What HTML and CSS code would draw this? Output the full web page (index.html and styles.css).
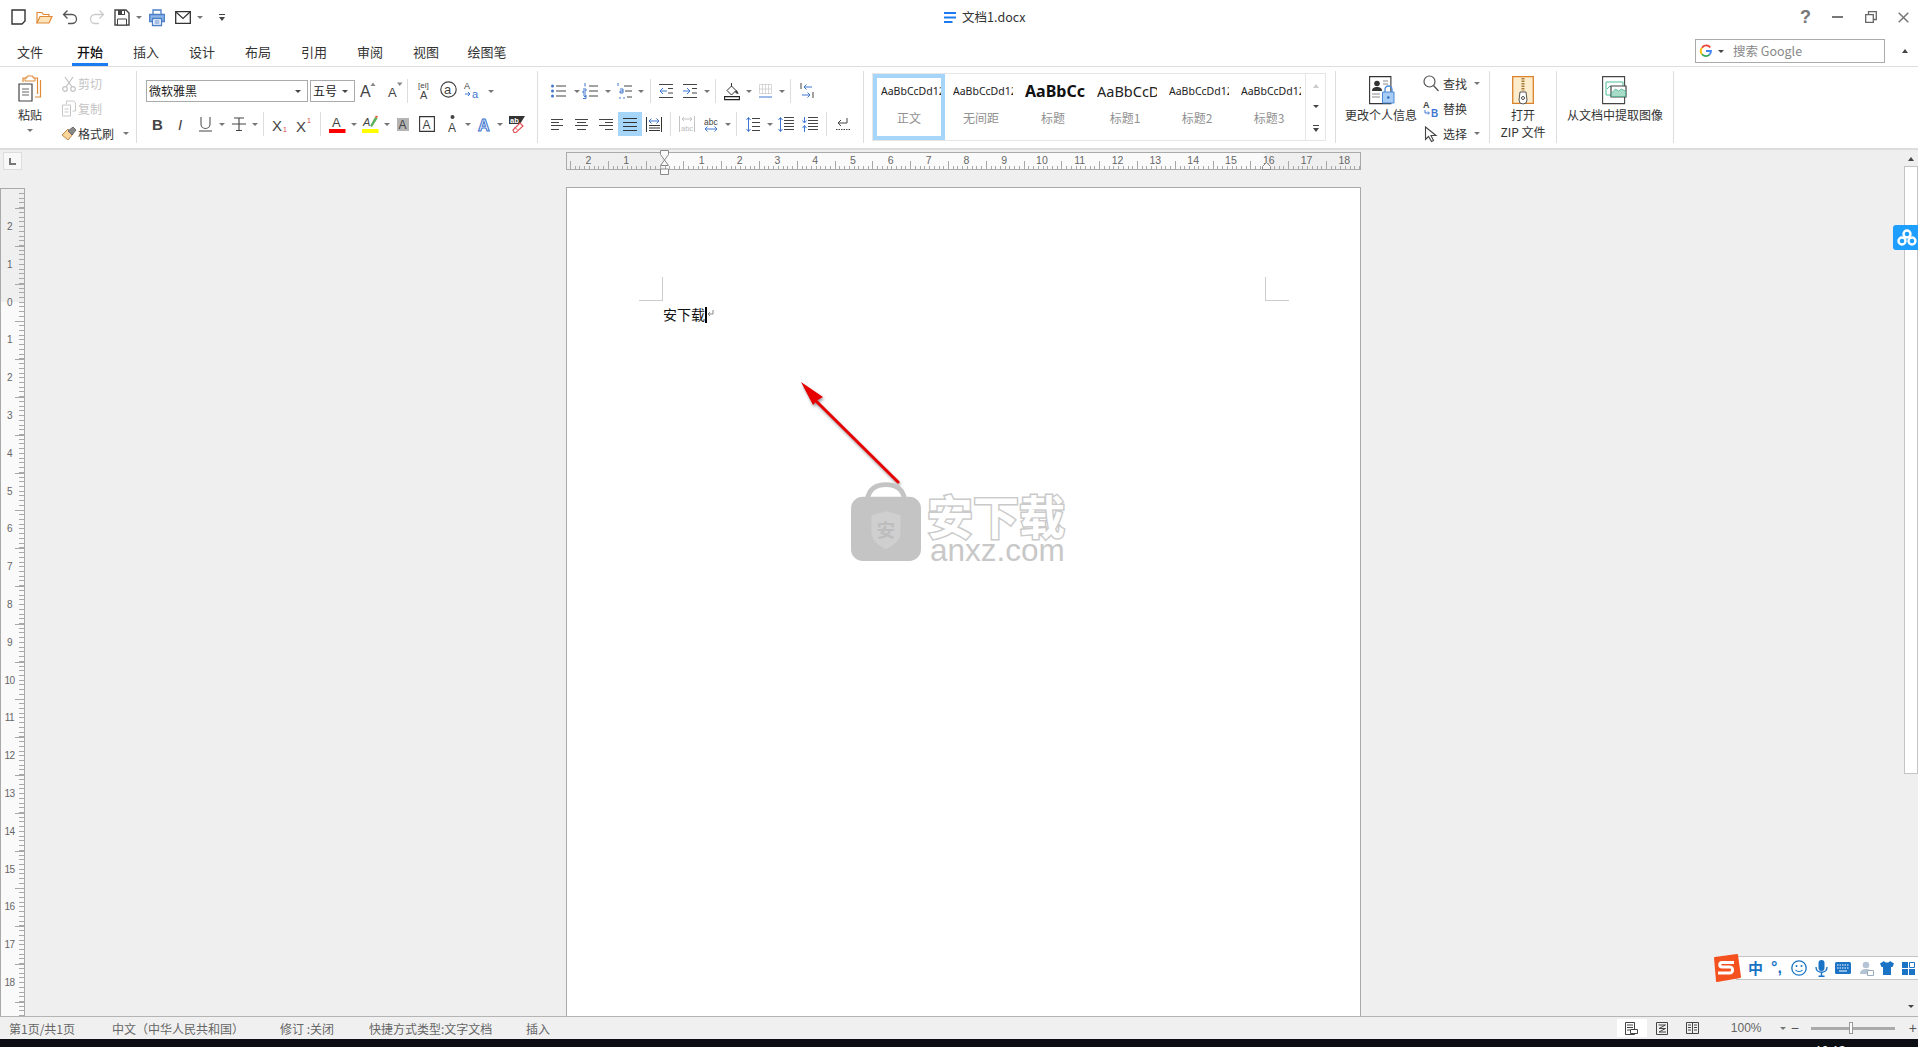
FILE: index.html
```html
<!DOCTYPE html>
<html lang="zh-CN">
<head>
<meta charset="utf-8">
<title>文档1.docx</title>
<link rel="stylesheet" href="styles.css">
</head>
<body>
<div class="app">
  <header class="titlebar">
    <div class="qat irow">
      <svg width="15" height="16" viewBox="0 0 15 16"><path d="M1 1h13v11l-3 3H1z" stroke="#333" stroke-width="1.400"/></svg>
      <svg width="17" height="13" viewBox="0 0 17 13"><path d="M1 12V1.500h5l1.500 2H13v2" stroke="#e08a36" stroke-width="1.200"/><path d="M1 12l3-6.500h12L13 12z" fill="#fde3ba" stroke="#e08a36" stroke-width="1.200"/></svg>
      <svg width="16" height="16" viewBox="0 0 16 16"><path d="M5.500 1.500L1.500 5.500l4 4M1.500 5.500H10a4.500 4.500 0 0 1 0 9H6" stroke="#555" stroke-width="1.300"/></svg>
      <svg width="16" height="16" viewBox="0 0 16 16"><path d="M10.500 1.500l4 4-4 4M14.500 5.500H6a4.500 4.500 0 0 0 0 9h4" stroke="#ccc" stroke-width="1.300"/></svg>
      <svg width="16" height="17" viewBox="0 0 16 17"><path d="M1 1h11l3 3v12H1z" fill="#fff" stroke="#444" stroke-width="1.400"/><path d="M4 1h7v5H4z" fill="#444"/><path d="M8 2h2v3H8z" fill="#fff"/><path d="M3.500 10h9v6h-9z" fill="#fff" stroke="#444"/></svg>
      <i class="caret"></i>
      <svg width="16" height="17" viewBox="0 0 16 17"><path d="M4 5V1h8v4" stroke="#4a7fc8" stroke-width="1.300"/><path d="M.7 5.500h14.600v7H.7z" fill="#8db4e6" stroke="#4a7fc8" stroke-width="1.300"/><path d="M3.500 9.500h9v7h-9z" fill="#fff" stroke="#4a7fc8" stroke-width="1.300"/><path d="M5.500 12h5M5.500 14h5" stroke="#4a7fc8"/></svg>
      <svg width="16" height="13" viewBox="0 0 16 13"><path d="M.7.700h14.600v11.600H.7z" stroke="#333" stroke-width="1.300"/><path d="M1 1l7 6.500L15 1" stroke="#333" stroke-width="1.200"/></svg>
      <i class="caret"></i>
      <svg width="6" height="7" viewBox="0 0 6 7"><path d="M0 0h6v1H0z" fill="#444"/><path d="M0 3h6L3 7z" fill="#444"/></svg>
    </div>
    <div class="doc-title">
      <svg width="12" height="11" viewBox="0 0 12 11"><path d="M0 0h12v2H0zM0 4.500h12v2H0zM0 9h8.500v2H0z" fill="#1a7cf0"/></svg>
      <span>文档1.docx</span>
    </div>
    <div class="winbtns irow">
      <span class="help">?</span>
      <svg width="11" height="3" viewBox="0 0 11 3"><path d="M0 0h11v2H0z" fill="#777"/></svg>
      <svg width="12" height="12" viewBox="0 0 12 12"><path d="M.7 3.700h7.600v7.600H.7z" stroke="#666" stroke-width="1.300"/><path d="M3.500 3.500V.7h7.800v7.800H8.500" stroke="#666" stroke-width="1.300"/></svg>
      <svg width="11" height="11" viewBox="0 0 11 11"><path d="M.7.700l9.600 9.600M10.300.700L.7 10.300" stroke="#777" stroke-width="1.500"/></svg>
    </div>
  </header>

  <nav class="tabs">
    <a class="tab first"><span>文件</span></a>
    <a class="tab active"><span>开始</span></a>
    <a class="tab"><span>插入</span></a>
    <a class="tab"><span>设计</span></a>
    <a class="tab"><span>布局</span></a>
    <a class="tab"><span>引用</span></a>
    <a class="tab"><span>审阅</span></a>
    <a class="tab"><span>视图</span></a>
    <a class="tab wide"><span>绘图笔</span></a>
    <div class="search">
      <svg width="12" height="12" viewBox="0 0 12 12"><path d="M10.300 2.500A5 5 0 0 0 2 2.800" stroke="#ea4335" stroke-width="1.800"/><path d="M2 2.800a5 5 0 0 0 0 6.400" stroke="#fbbc05" stroke-width="1.800"/><path d="M2 9.200a5 5 0 0 0 7.500.4" stroke="#34a853" stroke-width="1.800"/><path d="M9.500 9.600A5 5 0 0 0 11 6H6" stroke="#4285f4" stroke-width="1.800"/></svg>
      <i class="caret dark"></i>
      <span>搜索 Google</span>
    </div>
    <i class="caret up collapse"></i>
  </nav>

  <section class="ribbon">
    <div class="group g1">
      <div class="paste">
        <svg width="24" height="27" viewBox="0 0 24 27"><path d="M5 7V3h14.500v16" stroke="#e08a36" stroke-width="1.200"/><path d="M22.500 5v17H17" stroke="#e08a36" stroke-width="1.200"/><path d="M9 3V1h6v2h2v3H7V3z" fill="#fff" stroke="#e08a36"/><path d="M1 9h13v17H1z" fill="#fff" stroke="#444" stroke-width="1.200"/><path d="M4 14h7M4 17h7M4 20h7" stroke="#666"/></svg>
        <span class="paste-label">粘贴</span>
        <i class="caret"></i>
      </div>
      <div class="list">
        <div class="li disabled"><svg width="14" height="16" viewBox="0 0 14 16"><path d="M3 1l7 10M11 1L4 11" stroke="#c4c4c4" stroke-width="1.300"/><circle cx="3" cy="13" r="2.300" stroke="#c4c4c4" stroke-width="1.200"/><circle cx="11" cy="13" r="2.300" stroke="#c4c4c4" stroke-width="1.200"/></svg><span>剪切</span></div>
        <div class="li disabled"><svg width="15" height="17" viewBox="0 0 15 17"><path d="M5 4V1h7l2 2v8h-3" stroke="#c8c8c8"/><path d="M1 5h8v11H1z" stroke="#c8c8c8"/><path d="M3 9h4M3 12h4" stroke="#c8c8c8"/></svg><span>复制</span></div>
        <div class="li"><svg width="16" height="15" viewBox="0 0 16 15"><path d="M1 9l6-6 5 5-5 6z" fill="#fbd49a" stroke="#b58a55"/><path d="M7 5l5-4 3 3-4 5z" fill="#888" stroke="#555" stroke-width=".8"/></svg><span>格式刷</span><i class="caret li-caret"></i></div>
      </div>
    </div>

    <div class="group g2">
      <div class="grow g2r1">
        <div class="select font-sel"><span>微软雅黑</span><i class="caret dark"></i></div>
        <div class="select size-sel"><span>五号</span><i class="caret dark"></i></div>
        <svg width="17" height="15" viewBox="0 0 17 15"><text x="0" y="14.500" class="ig" font-size="16">A</text><path d="M10.500 4l2.500-3.500L15.500 4z" fill="#888"/></svg>
        <svg width="16" height="15" viewBox="0 0 16 15"><text x="0" y="14.500" class="ig" font-size="13">A</text><path d="M9 .5h5.500L11.700 4z" fill="#888"/></svg>
        <i class="vsep"></i>
        <svg width="14" height="18" viewBox="0 0 14 18"><text x="0" y="7" class="ig" font-size="8">[ei]</text><text x="2" y="17.500" class="ig" font-size="11">A</text></svg>
        <svg width="17" height="17" viewBox="0 0 17 17"><circle cx="8.500" cy="8.500" r="7.700" stroke="#444" stroke-width="1.200"/><text x="4" y="12.500" class="ig" font-size="13">a</text></svg>
        <svg width="16" height="17" viewBox="0 0 16 17"><text x="0" y="8" class="ig" font-size="9">A</text><text x="8" y="16.500" class="ib" font-size="11">a</text><path d="M1 13h5M4 11l2 2-2 2" stroke="#3f77d0"/></svg>
        <i class="caret"></i>
      </div>
      <div class="grow g2r2">
        <svg width="11" height="14" viewBox="0 0 11 14"><text x="0" y="13" class="ig bold" font-size="15">B</text></svg>
        <svg width="10" height="14" viewBox="0 0 10 14"><text x="1" y="13" class="ig ital" font-size="15">I</text></svg>
        <svg width="13" height="16" viewBox="0 0 13 16"><path d="M2 1v7a4.500 4.500 0 0 0 9 0V1" stroke="#555" stroke-width="1.100"/><path d="M0 15h13" stroke="#444"/></svg>
        <i class="caret"></i>
        <svg width="14" height="14" viewBox="0 0 14 14"><path d="M2 1h10M7 1v13M0 7h14M4 13.500h6" stroke="#444" stroke-width="1.100"/></svg>
        <i class="caret"></i>
        <i class="vsep"></i>
        <svg width="16" height="15" viewBox="0 0 16 15"><text x="0" y="14" class="ig" font-size="15">X</text><text x="11" y="14.500" class="ir" font-size="7">1</text></svg>
        <svg width="16" height="15" viewBox="0 0 16 15"><text x="0" y="14.500" class="ig" font-size="15">X</text><text x="11" y="6" class="ir" font-size="7">1</text></svg>
        <i class="vsep"></i>
        <svg width="17" height="18" viewBox="0 0 17 18"><text x="3" y="12" class="ig" font-size="13">A</text><path d="M0 14h16.500v4H0z" fill="#f00"/></svg>
        <i class="caret"></i>
        <svg width="17" height="18" viewBox="0 0 17 18"><text x="1" y="11" class="ig ital" font-size="11">A</text><path d="M8 11l5-9 2.500 1.500L10 12z" fill="#5fb05a"/><path d="M13 2l1-1.500 2 1-1 1.500z" fill="#e6522c"/><path d="M0 14h16.500v4H0z" fill="#ff0"/></svg>
        <i class="caret"></i>
        <svg width="12" height="13" viewBox="0 0 12 13"><path d="M0 0h12v13H0z" fill="#b4b4b4"/><text x="1.500" y="11" class="ig" font-size="12">A</text></svg>
        <svg width="16" height="16" viewBox="0 0 16 16"><path d="M.6.600h14.800v14.800H.6z" stroke="#333" stroke-width="1.100"/><text x="3.500" y="12.500" class="ig" font-size="12">A</text></svg>
        <svg width="11" height="18" viewBox="0 0 11 18"><circle cx="5.500" cy="2" r="2" fill="#444"/><text x="1" y="17" class="ig" font-size="12">A</text></svg>
        <i class="caret"></i>
        <svg class="glow" width="14" height="15" viewBox="0 0 14 15"><text x="1" y="14" class="bold" font-size="16">A</text></svg>
        <i class="caret"></i>
        <svg width="16" height="17" viewBox="0 0 16 17"><path d="M0 0h16l-5 8H0z" fill="#333"/><text x="1" y="7" class="iw" font-size="7.500">ab</text><path d="M4 14l7-7 3 3-7 6.500H5z" fill="#fff" stroke="#e0545a" stroke-width="1.200"/><path d="M5.500 11l3 3" stroke="#e0545a"/></svg>
      </div>
    </div>

    <div class="group g3">
      <div class="grow g3r1">
        <svg width="15" height="14" viewBox="0 0 15 14"><circle cx="1.500" cy="2" r="1.500" fill="#3f77d0"/><circle cx="1.500" cy="7" r="1.500" fill="#3f77d0"/><circle cx="1.500" cy="12" r="1.500" fill="#3f77d0"/><path d="M5 2h10M5 7h10M5 12h10" stroke="#444"/></svg>
        <i class="caret"></i>
        <svg width="15" height="16" viewBox="0 0 15 16"><path d="M2 0v3.500M0 6h3v2H0v2h3M0 12h3v3.500H0M3 13.500H1" stroke="#3f77d0"/><path d="M6 3h9M6 8h9M6 13h9" stroke="#444"/></svg>
        <i class="caret"></i>
        <svg width="15" height="16" viewBox="0 0 15 16"><path d="M1 0v3M3 6h3v4H3V8h3M7 14v2M3 14v2" stroke="#3f77d0"/><path d="M7 3h8M8 8h7M10 14h5" stroke="#444"/></svg>
        <i class="caret"></i>
        <i class="vsep"></i>
        <svg width="14" height="14" viewBox="0 0 14 14"><path d="M0 .5h14M9 4.500h5M9 9h5M0 13.500h14" stroke="#444"/><path d="M8 7H1M4 4L1 7l3 3" stroke="#3f77d0"/></svg>
        <svg width="14" height="14" viewBox="0 0 14 14"><path d="M0 .5h14M9 4.500h5M9 9h5M0 13.500h14" stroke="#444"/><path d="M0 7h7M4 4l3 3-3 3" stroke="#3f77d0"/></svg>
        <i class="caret"></i>
        <i class="vsep"></i>
        <svg width="16" height="17" viewBox="0 0 16 17"><path d="M7.500 0v6" stroke="#333"/><path d="M7.500 3L3 7.500 7.500 12l4.500-4.500z" fill="#fff" stroke="#333"/><path d="M12 7c1.500 1 2.500 2.500 2.500 4-1.500 0-3-1-3.500-2z" fill="#444"/><path d="M.6 13.600h14.800v3H.6z" fill="#fff" stroke="#222" stroke-width="1.100"/></svg>
        <i class="caret"></i>
        <svg width="13" height="14" viewBox="0 0 13 14"><path d="M.5.500h12v9H.5zM.5 5h12M6.500.5v9M3.500.5v9M9.500.5v9" stroke="#b4b4b4" stroke-dasharray="1 1"/><path d="M0 13h13" stroke="#3f77d0"/></svg>
        <i class="caret"></i>
        <i class="vsep"></i>
        <svg width="14" height="16" viewBox="0 0 14 16"><path d="M1 0v6M13 9v6" stroke="#444"/><path d="M12 4H4M6.500 1.500L4 4l2.500 2.500M2 12h8M7.500 9.500L10 12l-2.500 2.500" stroke="#3f77d0"/></svg>
      </div>
      <div class="grow g3r2">
        <svg width="12" height="11" viewBox="0 0 12 11"><path d="M0 .5h12M0 3.500h8M0 6.500h12M0 10.500h8" stroke="#444"/></svg>
        <svg width="13" height="11" viewBox="0 0 13 11"><path d="M0 .5h13M2 3.500h9M0 6.500h13M2 10.500h9" stroke="#444"/></svg>
        <svg width="14" height="11" viewBox="0 0 14 11"><path d="M0 .5h14M6 3.500h8M0 6.500h14M6 10.500h8" stroke="#444"/></svg>
        <div class="active-btn"><svg width="14" height="13" viewBox="0 0 14 13"><path d="M0 .5h14M0 4.500h14M0 8.500h14M0 12.500h14" stroke="#333"/></svg></div>
        <svg width="16" height="15" viewBox="0 0 16 15"><path d="M.5 0v15M15.500 0v15M3 8.500h11M3 11h11M3 13.500h11" stroke="#333"/><path d="M3 4h10M5.500 1.500L3 4l2.500 2.500M10.500 1.500L13 4l-2.500 2.500" stroke="#3f77d0"/></svg>
        <i class="vsep"></i>
        <svg width="16" height="16" viewBox="0 0 16 16"><path d="M3 3h10M5 1L3 3l2 2M11 1l2 2-2 2" stroke="#c4c4c4"/><path d="M.5 0v16M15.500 0v16" stroke="#c4c4c4"/><text x="2" y="14.500" class="il" font-size="7.500">abc</text></svg>
        <svg width="14" height="15" viewBox="0 0 14 15"><text x="0" y="7.500" class="ig" font-size="8.500">abc</text><path d="M1 12h12M3.500 9.500L1 12l2.500 2.500M10.500 9.500L13 12l-2.500 2.500" stroke="#3f77d0"/></svg>
        <i class="caret"></i>
        <i class="vsep"></i>
        <svg width="14" height="15" viewBox="0 0 14 15"><path d="M6 1.500h8M6 5.500h8M6 9.500h8M6 13.500h8" stroke="#444"/><path d="M2.500 .5v14M.5 3l2-2.500 2 2.500M.5 12l2 2.500 2-2.500" stroke="#3f77d0"/></svg>
        <i class="caret"></i>
        <svg width="16" height="15" viewBox="0 0 16 15"><path d="M6 .5h10M6 3.500h10M6 6.500h10M6 9.500h10M6 12.500h10" stroke="#444"/><path d="M2.500 .5v14M.5 3l2-2.500 2 2.500M.5 12l2 2.500 2-2.500" stroke="#3f77d0"/></svg>
        <svg width="16" height="15" viewBox="0 0 16 15"><path d="M6 .5h10M6 3.500h10M6 6.500h10M6 9.500h10M6 12.500h10" stroke="#444"/><path d="M2.500 0v5.500M.5 3.500l2 2.500 2-2.500M2.500 15V9M.5 11l2-2.500 2 2.500" stroke="#3f77d0"/></svg>
        <i class="vsep"></i>
        <svg width="14" height="12" viewBox="0 0 14 12"><path d="M11 0v5H2M5 2L2 5l3 3" stroke="#444"/><path d="M0 11.500h14" stroke="#444" stroke-dasharray="1.500 1"/></svg>
      </div>
    </div>

    <div class="group g4">
      <div class="gallery">
        <div class="style selected"><span class="pv">AaBbCcDd12</span><span class="sl">正文</span></div>
        <div class="style"><span class="pv">AaBbCcDd12</span><span class="sl">无间距</span></div>
        <div class="style"><span class="pv h0">AaBbCc</span><span class="sl">标题</span></div>
        <div class="style"><span class="pv h1">AaBbCcD</span><span class="sl">标题1</span></div>
        <div class="style"><span class="pv">AaBbCcDd12</span><span class="sl">标题2</span></div>
        <div class="style"><span class="pv">AaBbCcDd12</span><span class="sl">标题3</span></div>
        <div class="gal-scroll">
          <i class="caret up light"></i>
          <i class="caret dark"></i>
          <svg width="6" height="7" viewBox="0 0 6 7"><path d="M0 0h6v1H0z" fill="#444"/><path d="M0 3h6L3 7z" fill="#444"/></svg>
        </div>
      </div>
    </div>

    <div class="group g5">
      <div class="big bigw">
        <svg width="25" height="28" viewBox="0 0 25 28"><path d="M.6.600h21.300v27H.6z" fill="#fff" stroke="#333" stroke-width="1.100"/><circle cx="8" cy="7.500" r="2.800" fill="#333"/><path d="M3 15c0-3 2-4 5-4s5 1 5 4z" fill="#333"/><path d="M14 5h5M14 8h5M3 18h8M3 21h8" stroke="#888"/><path d="M16 16v-2.500a3.500 3.500 0 0 1 7 0V16" stroke="#4a88d8" stroke-width="1.300"/><path d="M13.500 16h11.500v11H13.500z" fill="#a8cdf5" stroke="#4a88d8"/><circle cx="19.300" cy="21.500" r="1.300" fill="#2d6cc0"/></svg>
        <span>更改个人信息</span>
      </div>
      <div class="list l5">
        <div class="li"><svg width="16" height="17" viewBox="0 0 16 17"><circle cx="6.500" cy="6.500" r="5.500" stroke="#555" stroke-width="1.200"/><path d="M10.500 10.500l5 5.500" stroke="#555" stroke-width="1.300"/></svg><span>查找</span><i class="caret li-caret2"></i></div>
        <div class="li"><svg width="16" height="17" viewBox="0 0 16 17"><text x="0" y="8" class="ig bold" font-size="9">A</text><text x="8" y="16.500" class="ib bold" font-size="10">B</text><path d="M2 10v3h4M5 11.500L6.500 13 5 14.500" stroke="#3f77d0"/></svg><span>替换</span></div>
        <div class="li"><svg width="16" height="16" viewBox="0 0 16 16"><path d="M2.500 1v12.500l3-3 3 5 2-1-2.500-5h5z" fill="#fff" stroke="#444" stroke-width="1.100"/></svg><span>选择</span><i class="caret li-caret2"></i></div>
      </div>
    </div>

    <div class="group g6">
      <div class="big">
        <svg width="22" height="28" viewBox="0 0 22 28"><path d="M.7.700h20.600v26.600H.7z" fill="#fdeccb" stroke="#d9822b" stroke-width="1.300"/><path d="M11 2v13" stroke="#a87a3c" stroke-width="3" stroke-dasharray="1.500 1"/><path d="M8 16h6l1 8a4 4 0 0 1-8 0z" fill="#fff" stroke="#555"/><circle cx="11" cy="22" r="1.500" stroke="#555"/></svg>
        <span>打开<br>ZIP 文件</span>
      </div>
    </div>

    <div class="group g7">
      <div class="big">
        <svg width="25" height="28" viewBox="0 0 25 28"><path d="M.6.600h22v27H.6z" fill="#fff" stroke="#444" stroke-width="1.100"/><path d="M4 6h17v13H4z" stroke="#4fbf9a"/><path d="M5 13l3-3 2 2" stroke="#4fbf9a"/><path d="M9 10h15v11H9z" fill="#fff" stroke="#444" stroke-width="1.200"/><path d="M9.500 17l4-4 3 2 3-2 4 2v5.500H9.500z" fill="#a8dcc8" stroke="#3fa98a" stroke-width=".7"/></svg>
        <span>从文档中提取图像</span>
      </div>
    </div>
  </section>

  <main class="workspace">
    <aside class="leftcol">
      <div class="corner"><svg width="7" height="7" viewBox="0 0 7 7"><path d="M0 0h2v5h5v2H0z" fill="#777"/></svg></div>
      <div class="vruler">
        <span>2</span><span>1</span><span>0</span><span>1</span><span>2</span><span>3</span><span>4</span><span>5</span><span>6</span><span>7</span><span>8</span><span>9</span><span>10</span><span>11</span><span>12</span><span>13</span><span>14</span><span>15</span><span>16</span><span>17</span><span>18</span>
      </div>
    </aside>
    <div class="center">
      <div class="hruler">
        <span>2</span><span>1</span><span></span><span>1</span><span>2</span><span>3</span><span>4</span><span>5</span><span>6</span><span>7</span><span>8</span><span>9</span><span>10</span><span>11</span><span>12</span><span>13</span><span>14</span><span>15</span><span>16</span><span>17</span><span>18</span>
        <svg class="mark-l" width="9" height="25" viewBox="0 0 9 25"><path d="M.5.500h8v4L4.500 10 .5 4.500zM4.500 10l4 5.500H.5zM.5 19h8v5.500h-8z" fill="#fafafa" stroke="#888"/></svg>
        <svg class="mark-r" width="9" height="8" viewBox="0 0 9 8"><path d="M4.500.5l4 4v3h-8v-3z" fill="#fafafa" stroke="#888"/></svg>
      </div>
      <div class="page">
        <i class="crop crop-l"></i>
        <i class="crop crop-r"></i>
        <p class="line">安下载<i class="cursor"></i><svg width="7" height="8" viewBox="0 0 7 8"><path d="M6 0v4H1M3 2L1 4l2 2" stroke="#888"/></svg></p>
        <svg class="arrow" width="110" height="115" viewBox="0 0 110 115"><path d="M7 7l22 15-6 3.500-4 4.500z" fill="#e60000"/><path d="M22 26l82 81" stroke="#e60000" stroke-width="3" stroke-linecap="round"/></svg>
        <div class="mark">
          <svg class="lock" width="70" height="81" viewBox="0 0 72 81"><path d="M17 16C19 5 27 1.500 36 1.500S53 5 55 16" stroke="#c4c4c4" stroke-width="5"/><rect x="0" y="14" width="72" height="66" rx="12" fill="#c4c4c4"/><path d="M36 29l15 4v17c0 9-7 14-15 18-8-4-15-9-15-18V33z" fill="#cfcfcf"/><text x="26.500" y="55" class="mark-safe" font-size="19">安</text></svg>
          <div class="mark-text"><b>安下载</b><span>anxz.com</span></div>
        </div>
      </div>
    </div>
    <aside class="vscroll">
      <i class="caret up dark"></i>
      <div class="thumb"></div>
      <i class="caret dark scroll-down"></i>
    </aside>
    <div class="baidu"><svg width="20" height="17" viewBox="0 0 20 17"><circle cx="10" cy="5" r="3.500" stroke="#fff" stroke-width="2.400"/><circle cx="5" cy="12" r="3.500" stroke="#fff" stroke-width="2.400"/><circle cx="15" cy="12" r="3.500" stroke="#fff" stroke-width="2.400"/></svg></div>
    <div class="sogou">
      <svg class="sg-logo" width="29" height="28" viewBox="0 0 29 28"><path d="M3 4l22-3 3 22-23 4z" fill="#f4511e" stroke="#f4511e" stroke-width="2" stroke-linejoin="round"/><path d="M22 8.500H10c-3 0-3 4.500 0 4.500h8c3.500 0 3.500 6-.5 6H6" stroke="#fff" stroke-width="3"/></svg>
      <div class="sg-bar">
        <b class="sg-zh">中</b>
        <span class="sg-p">°,</span>
        <svg width="16" height="16" viewBox="0 0 16 16"><circle cx="8" cy="8" r="7.200" stroke="#1a73c4" stroke-width="1.300"/><circle cx="5.500" cy="6" r="1" fill="#1a73c4"/><circle cx="10.500" cy="6" r="1" fill="#1a73c4"/><path d="M4.500 10c1.500 2 5.500 2 7 0" stroke="#1a73c4" stroke-width="1.200"/></svg>
        <svg width="13" height="17" viewBox="0 0 13 17"><rect x="3.500" y="0" width="6" height="11" rx="3" fill="#1a73c4"/><path d="M1 7c0 7 11 7 11 0M6.500 12v4M3.500 16.300h6" stroke="#1a73c4" stroke-width="1.400"/></svg>
        <svg width="16" height="12" viewBox="0 0 16 12"><rect width="16" height="12" rx="1.500" fill="#1a73c4"/><path d="M2 3h12M2 6h12" stroke="#fff" stroke-dasharray="1.500 1"/><path d="M4 9h8" stroke="#fff"/></svg>
        <svg width="14" height="15" viewBox="0 0 14 15"><circle cx="6" cy="4" r="3.300" fill="#b4c4d4"/><path d="M0 13c0-4 3-5 6-5s5 1 5 2v3z" fill="#b4c4d4"/><path d="M7.500 9.500h6v5h-6z" fill="#fff" stroke="#9ab"/></svg>
        <svg width="14" height="14" viewBox="0 0 14 14"><path d="M4 0L0 2.500 1.500 6H3v8h8V6h1.500L14 2.500 10 0c-1 2-5 2-6 0z" fill="#1a73c4"/></svg>
        <svg width="13" height="13" viewBox="0 0 13 13"><path d="M0 0h6v6H0zM0 7h6v6H0zM7 7h6v6H7z" fill="#1a73c4"/><path d="M7.500.5h5v5h-5z" stroke="#1a73c4"/></svg>
      </div>
    </div>
  </main>

  <footer class="statusbar">
    <span>第1页/共1页</span>
    <span>中文（中华人民共和国）</span>
    <span>修订 :关闭</span>
    <span>快捷方式类型:文字文档</span>
    <span>插入</span>
    <div></div>
    <div class="view-on"><svg width="13" height="13" viewBox="0 0 13 13"><path d="M.5.500h9v12h-9z" stroke="#444"/><path d="M2 3h6M2 5.500h6M2 8h3" stroke="#444"/><path d="M5.500 7.500h7v4h-7z" fill="#fff" stroke="#444"/></svg></div>
    <svg width="12" height="13" viewBox="0 0 12 13"><path d="M.5.500h11v12H.5z" stroke="#444"/><path d="M2.500 3h7L3 6.500h6.500L3 10h7" stroke="#444"/></svg>
    <svg width="13" height="12" viewBox="0 0 13 12"><path d="M.5.500h12v11H.5zM6.500.5v11M2 3h3M2 5.500h3M2 8h3M8 3h3M8 5.500h3M8 8h3" stroke="#444"/></svg>
    <span class="zoomv">100%</span>
    <i class="caret"></i>
    <span class="zoomb">−</span>
    <div class="slider"><i></i></div>
    <span class="zoomb">+</span>
  </footer>
  <div class="taskbar"><span>10:12</span></div>
</div>
</body>
</html>
```

FILE: styles.css
```css
* { box-sizing: border-box; }
html, body { margin: 0; height: 100%; overflow: hidden; }
body { font-family: "Noto Sans CJK SC", "Liberation Sans", sans-serif; font-size: 12px; color: #333; background: #fff; }
svg { fill: none; display: block; flex: none; overflow: visible; }
svg text { font-family: "Liberation Sans", sans-serif; }
.ig { fill: #444; }
.ib { fill: #3f77d0; }
.ir { fill: #d83a3a; }
.il { fill: #bbb; }
.iw { fill: #fff; font-weight: 700; }
.bold { font-weight: 700; }
.ital { font-style: italic; }
i { display: block; font-style: normal; }

.app { height: 1047px; display: flex; flex-direction: column; }

.caret { width: 0; height: 0; border-left: 3px solid transparent; border-right: 3px solid transparent; border-top: 3px solid #777; }
.caret.dark { border-top-color: #444; }
.caret.up { border-top: 0; border-bottom: 4px solid #444; }
.caret.light { border-bottom-color: #ccc; }

.titlebar { height: 38px; display: flex; align-items: center; padding-left: 11px; padding-bottom: 4px; background: #fff; }
.irow { display: grid; align-items: center; justify-items: start; }
.qat { width: 933px; grid-template-columns: 25px 26px 27px 25px 22px 13px 26px 22px 22px auto; justify-content: start; }
.doc-title { display: flex; align-items: center; gap: 6px; font-size: 12.500px; color: #333; }
.doc-title span { padding-bottom: 2px; }
.winbtns { margin-left: auto; margin-right: 10px; grid-template-columns: 32px 33px 33px 10px; }
.help { font: 700 18px/18px "Liberation Sans", sans-serif; color: #777; }

.tabs { height: 29px; display: flex; align-items: flex-start; border-bottom: 1px solid #ddd; font-size: 13px; }
.tab { width: 56px; display: flex; justify-content: center; color: #333; }
.tab.first { width: 60px; margin-right: 2px; }
.tab.wide { width: 66px; }
.tab span { display: block; height: 28px; line-height: 28px; padding: 0 4.500px; border-bottom: 3px solid transparent; }
.tab.active span { border-bottom-color: #1a7cf0; font-weight: 500; color: #111; }
.search { margin-left: auto; margin-top: 1px; width: 190px; height: 24px; border: 1px solid #aaa; display: flex; align-items: center; padding-left: 4px; color: #888; font-size: 12.500px; }
.search .caret { margin-left: 6px; margin-right: 9px; }
.search span { padding-bottom: 2px; }
.collapse { margin: 11px 10px 0 17px; }

.ribbon { height: 83px; display: flex; align-items: flex-start; border-bottom: 2px solid #dcdcdc; }
.group { height: 72px; margin-top: 4px; border-right: 1px solid #ddd; flex: none; display: flex; color: #333; }
.g1 { width: 137px; }
.g2 { width: 401px; padding: 8px 0 0 9px; flex-direction: column; gap: 11px; }
.g3 { width: 326px; padding: 8px 0 0 13px; flex-direction: column; gap: 11px; }
.g4 { width: 472px; padding: 2px 0 0 8px; }
.g5 { width: 154px; padding-left: 9px; }
.g6 { width: 67px; justify-content: center; }
.g7 { width: 117px; justify-content: center; }

.paste { width: 60px; flex: none; display: flex; flex-direction: column; align-items: center; padding-top: 4px; }
.paste-label { margin-top: 5px; line-height: 16px; }
.paste .caret { margin-top: 6px; }
.list { display: flex; flex-direction: column; flex: none; }
.li { height: 25px; flex: none; display: flex; align-items: center; width: 76px; }
.li svg { width: 18px; }
.disabled { color: #c4c4c4; }
.li-caret { margin-left: 9px; }
.li-caret2 { margin-left: 7px; }
.l5 { margin-left: 6px; width: 60px; }
.l5 .li { width: 60px; }
.l5 .li svg { width: 16px; margin-right: 4px; }

.grow { display: grid; align-items: center; justify-items: start; justify-content: start; }
.g2r1 { height: 22px; grid-template-columns: 164px 50px 28px 19px 11px 22px 24px 24px auto; }
.g2r1 > svg { margin-bottom: 3px; }
.g2r2 { height: 24px; margin-left: 6px; grid-template-columns: 25px 22px 20px 13px 20px 11px 9px 24px 24px 9px 22px 11px 22px 13px 22px 28px 18px 12px 20px 12px auto; }
.g3r1 { height: 22px; grid-template-columns: 23px 9px 22px 12px 21px 12px 9px 24px 21px 11px 9px 22px 13px 20px 11px 10px auto; }
.g3r2 { height: 24px; grid-template-columns: 24px 24px 19px 28px 24px 9px 25px 21px 11px 10px 21px 11px 24px 24px 10px auto; }
.vsep { width: 1px; height: 24px; background: #ddd; }
.select { height: 22px; border: 1px solid #aaa; display: flex; align-items: center; justify-content: space-between; padding: 0 6px 0 2px; color: #222; }
.select span { padding-bottom: 2px; }
.font-sel { width: 162px; }
.size-sel { width: 45px; }
.glow text { fill: #fff; stroke: #3f77d0; stroke-width: 1.100px; }
.active-btn { width: 24px; height: 24px; background: #a6d5fa; display: flex; align-items: center; justify-content: center; }

.gallery { width: 454px; height: 68px; border: 1px solid #e6e6e6; display: flex; }
.style { width: 72px; height: 66px; display: flex; flex-direction: column; align-items: center; padding-top: 7px; color: #222; }
.style.selected { border: 4px solid #a6d5fa; padding-top: 3px; }
.pv { display: block; width: 60px; margin-left: 4px; height: 20px; line-height: 20px; overflow: hidden; white-space: nowrap; font-size: 10.500px; font-family: "Noto Sans", "Liberation Sans", sans-serif; color: #222; }
.pv.h0 { font-size: 16px; font-weight: 700; color: #111; }
.pv.h1 { font-size: 14.500px; }
.sl { margin-top: 9px; line-height: 16px; font-size: 12px; color: #909090; }
.gal-scroll { flex: 1; border-left: 1px solid #e6e6e6; display: flex; flex-direction: column; align-items: center; justify-content: space-between; padding: 10px 0 8px; }

.big { display: flex; flex: none; flex-direction: column; align-items: center; padding-top: 5px; text-align: center; line-height: 17px; }
.big span { margin-top: 2px; white-space: nowrap; }
.bigw { width: 72px; }

.workspace { flex: 1; position: relative; display: grid; grid-template-columns: 25px 1fr 14px; background: #efefef; min-height: 0; }
.leftcol { display: flex; flex-direction: column; padding-top: 2px; min-height: 0; }
.corner { width: 19px; height: 18px; margin-left: 3px; background: #f8f8f8; border: 1px solid #ddd; display: flex; align-items: center; justify-content: center; }
.vruler { flex: 1; margin-top: 18px; min-height: 0; overflow: hidden; border: 1px solid #aaa; border-bottom: 0; padding-top: 19.100px;
  background:
    repeating-linear-gradient(to bottom, #a8a8a8 0 1px, transparent 1px 37.800px) right 0 top 18.500px / 9px 900px no-repeat,
    repeating-linear-gradient(to bottom, #a8a8a8 0 1px, transparent 1px 4.725px) right 0 top 4.300px / 5px 900px no-repeat,
    linear-gradient(to bottom, #efefef 113px, #fafafa 113px);
  display: flex; flex-direction: column; align-items: flex-start; }
.vruler span { flex: none; height: 37.800px; line-height: 37.800px; width: 17px; text-align: center; font-size: 10px; color: #666; font-family: "Liberation Sans", sans-serif; letter-spacing: -.5px; }

.center { padding: 2px 0 0 541px; display: flex; flex-direction: column; min-height: 0; }
.hruler { position: relative; width: 795px; height: 18px; border: 1px solid #aaa; display: flex; padding-left: 2.500px;
  background:
    repeating-linear-gradient(to right, #a8a8a8 0 1px, transparent 1px 37.800px) left 2.500px bottom 0 / 800px 8px no-repeat,
    repeating-linear-gradient(to right, #a8a8a8 0 1px, transparent 1px 4.725px) left 2.500px bottom 0 / 800px 3px no-repeat,
    linear-gradient(to right, #efefef 97px, #fafafa 97px 698px, #efefef 698px); }
.hruler span { flex: none; width: 37.800px; text-align: center; font: 10.500px/14px "Liberation Sans", sans-serif; color: #666; }
.mark-l { position: absolute; left: 93px; top: -3px; }
.mark-r { position: absolute; left: 695px; top: 9px; }

.page { position: relative; flex: 1; width: 795px; margin-top: 17px; background: #fff; border: 1px solid #aaa; border-bottom: 0; padding: 117px 0 0 96px; }
.line { margin: 0; height: 18px; display: flex; align-items: center; font-size: 14px; line-height: 18px; color: #111; }
.cursor { width: 2px; height: 16px; background: #000; margin-top: 2px; }
.crop { position: absolute; width: 24px; height: 24px; top: 89px; border-bottom: 1px solid #ccc; }
.crop-l { left: 72px; border-right: 1px solid #ccc; }
.crop-r { left: 698px; border-left: 1px solid #ccc; }
.arrow { position: absolute; left: 227px; top: 187px; filter: drop-shadow(1px 2px 1.500px rgba(0,0,0,.4)); }
.mark { position: absolute; left: 284px; top: 294px; display: flex; gap: 6px; }
.mark-safe { fill: #bdbdbd; font-family: "Noto Sans CJK SC", sans-serif; font-weight: 700; }
.mark-text { display: flex; flex-direction: column; padding-top: 9px; }
.mark-text b { font-size: 46px; line-height: 46px; font-weight: 700; color: #fff; -webkit-text-stroke: 3px #cacaca; paint-order: stroke fill; }
.mark-text span { font: 31.500px/26px "Liberation Sans", sans-serif; color: #c8c8c8; margin-left: 3px; }

.vscroll { display: flex; flex-direction: column; align-items: center; padding-top: 7px; }
.thumb { width: 14px; height: 608px; margin-top: 5px; background: #fff; border: 1px solid #c4c4c4; }
.scroll-down { margin-top: auto; margin-bottom: 8px; }
.baidu { position: absolute; right: 0; top: 75px; width: 25px; height: 25px; background: #1e9fff; border-radius: 3px 0 0 3px; display: flex; align-items: center; justify-content: center; padding-left: 2px; overflow: hidden; }
.sogou { position: absolute; right: 0; top: 804px; width: 206px; height: 28px; display: flex; align-items: center; }
.sg-logo { position: relative; z-index: 1; }
.sg-bar { flex: 1; height: 24px; margin-left: -5px; background: #fff; border: 1px solid #c4c4c4; border-right: 0; display: grid; grid-template-columns: 23px 20px 24px 20px 25px 20px 22px auto; align-items: center; justify-items: start; padding-left: 11px; color: #1a73c4; }
.sg-zh { font-size: 15px; line-height: 18px; font-weight: 700; }
.sg-p { font: 700 16px/16px "Liberation Sans", sans-serif; }

.statusbar { height: 23px; flex: none; border-top: 1px solid #b4b4b4; background: #f0f0f0; color: #666; padding: 0 1px 0 9px; display: grid; grid-template-columns: 103px 168px 89px 157px 30px 1fr 39px 30px 45px 49px 11px 20px 98px auto; align-items: center; justify-items: start; }
.view-on { width: 30px; height: 18px; background: #fff; display: flex; align-items: center; justify-content: center; }
.zoomv { font-size: 12px; font-family: "Liberation Sans", sans-serif; color: #666; }
.zoomb { font: 14px/14px "Liberation Sans", sans-serif; color: #555; }
.slider { position: relative; width: 84px; height: 3px; background: #aaa; }
.slider i { position: absolute; left: 38px; top: -5px; width: 4px; height: 12px; background: #fff; border: 1px solid #999; }
.taskbar { height: 8px; flex: none; background: #0b0f14; color: #fff; overflow: hidden; padding: 6px 0 0 1815px; font: 12px/12px "Noto Sans", sans-serif; }
```
